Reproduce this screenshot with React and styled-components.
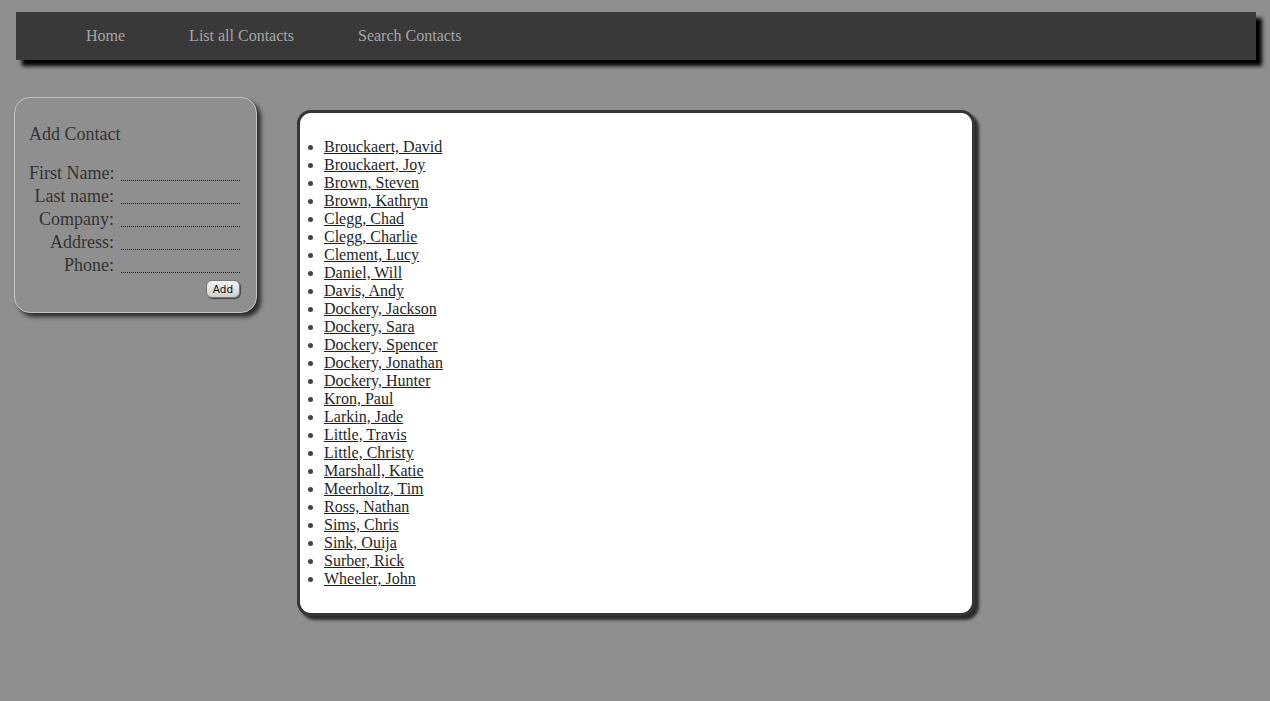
import React from 'react';
import styled, { createGlobalStyle } from 'styled-components';

const GlobalStyle = createGlobalStyle`
  html, body {
    margin: 0;
    padding: 0;
    background: #8f8f8f;
    font-family: 'Liberation Serif', 'Times New Roman', serif;
  }
`;

const Page = styled.div`
  min-height: 701px;
  padding: 12px 14px 0 14px;
  box-sizing: border-box;
`;

const NavBar = styled.nav`
  display: flex;
  align-items: center;
  height: 48px;
  margin: 0 0 0 2px;
  width: 1240px;
  padding-left: 38px;
  box-sizing: border-box;
  background-color: #393939;
  box-shadow: 6px 6px 4px #000;
`;

const NavLink = styled.a`
  color: #a5a5a5;
  font-size: 16px;
  text-decoration: none;
  padding: 0 32px;
  cursor: pointer;
`;

const Content = styled.div`
  display: flex;
  align-items: flex-start;
  gap: 40px;
  margin-top: 37px;
`;

const SideCard = styled.div`
  width: 243px;
  box-sizing: border-box;
  padding: 24px 16px 14px 14px;
  border: 1px solid #c4c4c4;
  border-radius: 16px;
  background: #8f8f8f;
  box-shadow: 4px 4px 4px #2e2e2e;
  color: #333;
`;

const CardTitle = styled.h3`
  margin: 0 0 17px 0;
  font-size: 18px;
  font-weight: normal;
  line-height: 24px;
`;

const FormGrid = styled.div`
  display: grid;
  grid-template-columns: 85px 119px;
  column-gap: 7px;
  row-gap: 2px;
  align-items: end;
`;

const Label = styled.label`
  text-align: right;
  font-size: 18px;
  line-height: 21px;
  white-space: nowrap;
`;

const Field = styled.input`
  width: 119px;
  height: 17px;
  box-sizing: border-box;
  margin: 0 0 3px 0;
  padding: 0;
  border: none;
  border-bottom: 1px dotted #222;
  background: transparent;
  outline: none;
`;

const ButtonRow = styled.div`
  display: flex;
  justify-content: flex-end;
  margin-top: 4px;
`;

const AddButton = styled.button`
  width: 34px;
  height: 18px;
  padding: 0;
  font-family: 'DejaVu Sans', 'Liberation Sans', sans-serif;
  font-size: 10.5px;
  color: #111;
  border: 1px solid #777;
  border-radius: 6px;
  background: linear-gradient(#f4f4f4, #cfcfcf);
  box-shadow: 1px 1px 1px #444;
`;

const MainCard = styled.div`
  width: 678px;
  box-sizing: border-box;
  margin-top: 13px;
  padding: 25px 0 25px 0;
  background: #fff;
  border: 3px solid #353535;
  border-radius: 14px;
  box-shadow: 4px 4px 3px #2c2c2c;
`;

const ContactList = styled.ul`
  margin: 0;
  padding-left: 24px;
  font-size: 16px;
  line-height: 18px;
  color: #444;
`;

const Item = styled.li``;

const ContactLink = styled.a`
  color: #1f1f1f;
  text-decoration: underline;
`;

const fields = ['First Name:', 'Last name:', 'Company:', 'Address:', 'Phone:'];

const contacts = [
  'Brouckaert, David',
  'Brouckaert, Joy',
  'Brown, Steven',
  'Brown, Kathryn',
  'Clegg, Chad',
  'Clegg, Charlie',
  'Clement, Lucy',
  'Daniel, Will',
  'Davis, Andy',
  'Dockery, Jackson',
  'Dockery, Sara',
  'Dockery, Spencer',
  'Dockery, Jonathan',
  'Dockery, Hunter',
  'Kron, Paul',
  'Larkin, Jade',
  'Little, Travis',
  'Little, Christy',
  'Marshall, Katie',
  'Meerholtz, Tim',
  'Ross, Nathan',
  'Sims, Chris',
  'Sink, Ouija',
  'Surber, Rick',
  'Wheeler, John',
];

export default function App() {
  return (
    <>
      <GlobalStyle />
      <Page>
        <NavBar>
          <NavLink>Home</NavLink>
          <NavLink>List all Contacts</NavLink>
          <NavLink>Search Contacts</NavLink>
        </NavBar>
        <Content>
          <SideCard>
            <CardTitle>Add Contact</CardTitle>
            <FormGrid>
              {fields.map((f) => (
                <React.Fragment key={f}>
                  <Label>{f}</Label>
                  <Field type="text" />
                </React.Fragment>
              ))}
            </FormGrid>
            <ButtonRow>
              <AddButton>Add</AddButton>
            </ButtonRow>
          </SideCard>
          <MainCard>
            <ContactList>
              {contacts.map((c) => (
                <Item key={c}>
                  <ContactLink href="#">{c}</ContactLink>
                </Item>
              ))}
            </ContactList>
          </MainCard>
        </Content>
      </Page>
    </>
  );
}
